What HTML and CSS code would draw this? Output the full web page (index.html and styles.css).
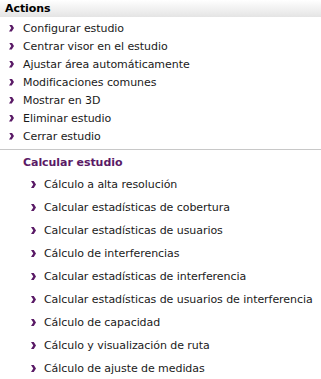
FILE: index.html
```html
<!DOCTYPE html>
<html>
<head>
<meta charset="utf-8">
<link rel="stylesheet" href="styles.css">
</head>
<body>
<div class="panel">
  <div class="header">Actions</div>
  <ul class="list top">
    <li><span class="chev"></span>Configurar estudio</li>
    <li><span class="chev"></span>Centrar visor en el estudio</li>
    <li><span class="chev"></span>Ajustar área automáticamente</li>
    <li><span class="chev"></span>Modificaciones comunes</li>
    <li><span class="chev"></span>Mostrar en 3D</li>
    <li><span class="chev"></span>Eliminar estudio</li>
    <li><span class="chev"></span>Cerrar estudio</li>
  </ul>
  <div class="section">
    <div class="section-title">Calcular estudio</div>
    <ul class="list sub">
      <li><span class="chev"></span>Cálculo a alta resolución</li>
      <li><span class="chev"></span>Calcular estadísticas de cobertura</li>
      <li><span class="chev"></span>Calcular estadísticas de usuarios</li>
      <li><span class="chev"></span>Cálculo de interferencias</li>
      <li><span class="chev"></span>Calcular estadísticas de interferencia</li>
      <li><span class="chev"></span>Calcular estadísticas de usuarios de interferencia</li>
      <li><span class="chev"></span>Cálculo de capacidad</li>
      <li><span class="chev"></span>Cálculo y visualización de ruta</li>
      <li><span class="chev"></span>Cálculo de ajuste de medidas</li>
    </ul>
  </div>
</div>
</body>
</html>
```
FILE: styles.css
```css
html, body {
  margin: 0;
  padding: 0;
  background: #ffffff;
}
body {
  font-family: "DejaVu Sans", Verdana, sans-serif;
  font-size: 11px;
  letter-spacing: -0.06px;
  color: #1a1a1a;
}
.panel {
  width: 321px;
}
.header {
  height: 17px;
  line-height: 17px;
  padding-left: 5px;
  font-weight: bold;
  color: #000;
  background: linear-gradient(#ffffff, #e4e4e4);
}
.list {
  list-style: none;
  margin: 0;
  padding: 0;
}
.list li {
  display: flex;
  align-items: center;
  white-space: nowrap;
}
.top {
  padding-top: 2px;
  padding-bottom: 4px;
  border-bottom: 1px solid #c8c8c8;
}
.top li {
  height: 18px;
  padding-left: 9px;
}
.chev {
  display: inline-block;
  flex: none;
  width: 5px;
  height: 7px;
  margin-right: 9px;
  background: #5a1a66;
  clip-path: polygon(0 0, 55% 0, 100% 50%, 55% 100%, 0 100%, 45% 50%);
}
.section {
  padding-top: 4px;
}
.section-title {
  padding-left: 23px;
  height: 19px;
  line-height: 18px;
  font-weight: bold;
  color: #5a1a66;
}
.sub li {
  height: 23px;
  padding-left: 31px;
}
.sub .chev {
  margin-right: 8px;
}
```
